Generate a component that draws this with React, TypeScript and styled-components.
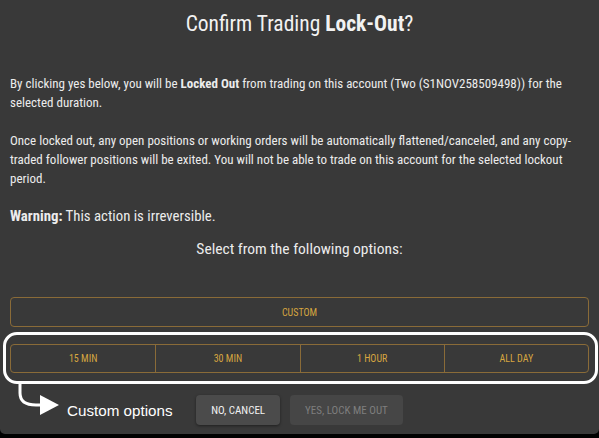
import styled, { createGlobalStyle } from 'styled-components'

const GlobalStyle = createGlobalStyle`
  html, body {
    margin: 0;
    padding: 0;
    background: #000;
  }
  * {
    box-sizing: border-box;
  }
`

const durations = ['15 MIN', '30 MIN', '1 HOUR', 'ALL DAY']

const App = () => {
  return (
    <>
      <GlobalStyle />
      <Modal>
        <Title>
          Confirm Trading <b>Lock-Out</b>?
        </Title>

        <Body>
          <Paragraph>
            By clicking yes below, you will be <b>Locked Out</b> from trading on
            this account (Two (S1NOV258509498)) for the selected duration.
          </Paragraph>
          <Paragraph>
            Once locked out, any open positions or working orders will be
            automatically flattened/canceled, and any copy-traded follower
            positions will be exited. You will not be able to trade on this
            account for the selected lockout period.
          </Paragraph>
          <Warning>
            <b>Warning:</b> This action is irreversible.
          </Warning>
        </Body>

        <Subtitle>Select from the following options:</Subtitle>

        <CustomButton>CUSTOM</CustomButton>

        <RowWrapper>
          <DurationRow>
            {durations.map((d) => (
              <DurationButton key={d}>{d}</DurationButton>
            ))}
          </DurationRow>
          <Highlight />
          <Pointer>
            <svg width="46" height="40" viewBox="0 0 46 40">
              <path
                d="M4 0 V10 Q4 22 20 22 H26"
                fill="none"
                stroke="#fff"
                strokeWidth="3"
              />
              <polygon points="24,12 43,22 24,32" fill="#fff" />
            </svg>
            <PointerLabel>Custom options</PointerLabel>
          </Pointer>
        </RowWrapper>

        <Footer>
          <ActionButton>NO, CANCEL</ActionButton>
          <ActionButton disabled>YES, LOCK ME OUT</ActionButton>
        </Footer>
      </Modal>
    </>
  )
}

const Modal = styled.div`
  width: 599px;
  height: 434px;
  background-color: #393939;
  border-radius: 0 0 5px 5px;
  padding: 12px 10px 0;
  font-family: 'Roboto Condensed', 'Liberation Sans Narrow', 'DejaVu Sans Condensed', Roboto, sans-serif;
  font-stretch: condensed;
  color: #ececec;
`

const Title = styled.h1`
  margin: 0;
  font-size: 21.5px;
  line-height: 24px;
  font-weight: 400;
  text-align: center;
  color: #f2f2f2;

  b {
    font-weight: 700;
  }
`

const Body = styled.div`
  margin-top: 38px;
`

const Paragraph = styled.p`
  margin: 0 0 19px;
  font-size: 13px;
  line-height: 19px;

  b {
    font-weight: 700;
  }
`

const Warning = styled(Paragraph)`
  margin: 0;
  font-size: 14.8px;
`

const Subtitle = styled.div`
  margin-top: 14px;
  font-size: 15.5px;
  line-height: 19px;
  text-align: center;
`

const CustomButton = styled.button`
  display: block;
  width: 100%;
  height: 30px;
  margin-top: 38px;
  background: transparent;
  border: 1px solid #8a6b38;
  border-radius: 4px;
  color: #d6a640;
  font-family: inherit;
  font-stretch: inherit;
  font-size: 10px;
  cursor: pointer;
`

const RowWrapper = styled.div`
  position: relative;
  margin-top: 17px;
`

const DurationRow = styled.div`
  display: grid;
  grid-template-columns: repeat(4, 1fr);
  height: 29px;
  border: 1px solid #8a6b38;
  border-radius: 4px;
  overflow: hidden;
`

const DurationButton = styled.button`
  background: transparent;
  border: none;
  border-left: 1px solid #8a6b38;
  color: #d6a640;
  font-family: inherit;
  font-stretch: inherit;
  font-size: 10px;
  cursor: pointer;

  &:first-child {
    border-left: none;
  }
`

const Highlight = styled.div`
  position: absolute;
  top: -12px;
  left: -7px;
  right: -9px;
  bottom: -11px;
  border: 3px solid #fff;
  border-radius: 14px;
  pointer-events: none;
`

const Pointer = styled.div`
  position: absolute;
  left: 6px;
  top: 39px;
  display: flex;
  align-items: flex-end;
  pointer-events: none;
`

const PointerLabel = styled.span`
  margin-left: 5px;
  margin-bottom: 3px;
  font-family: 'Liberation Sans', Arial, sans-serif;
  font-stretch: normal;
  font-size: 15.2px;
  line-height: 18px;
  color: #fff;
`

const Footer = styled.div`
  display: flex;
  justify-content: center;
  gap: 10px;
  margin-top: 22px;
`

const ActionButton = styled.button`
  height: 30px;
  padding: 0 15px;
  border: none;
  border-radius: 4px;
  background-color: ${(p) => (p.disabled ? '#464646' : '#4b4b4b')};
  color: ${(p) => (p.disabled ? '#7e7e7e' : '#f2f2f2')};
  box-shadow: ${(p) => (p.disabled ? 'none' : '0 1px 3px rgba(0, 0, 0, 0.45)')};
  font-family: inherit;
  font-stretch: inherit;
  font-size: 11px;
  font-weight: 400;
  cursor: ${(p) => (p.disabled ? 'default' : 'pointer')};
`

export default App
